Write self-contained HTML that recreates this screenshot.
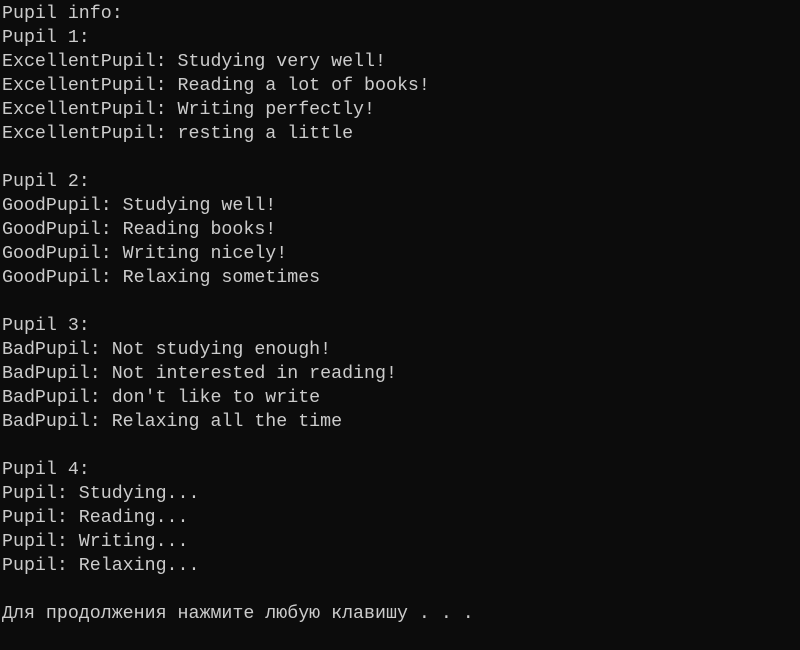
<!DOCTYPE html>
<html><head><meta charset="utf-8"><style>
html,body{margin:0;padding:0;background:#0c0c0c;width:800px;height:650px;overflow:hidden}
pre{margin:0;padding:2px 0 0 2px;font-family:"Liberation Mono","DejaVu Sans Mono",monospace;font-size:18.3px;line-height:24px;color:#cccccc;white-space:pre}
</style></head><body><pre>Pupil info:
Pupil 1:
ExcellentPupil: Studying very well!
ExcellentPupil: Reading a lot of books!
ExcellentPupil: Writing perfectly!
ExcellentPupil: resting a little

Pupil 2:
GoodPupil: Studying well!
GoodPupil: Reading books!
GoodPupil: Writing nicely!
GoodPupil: Relaxing sometimes

Pupil 3:
BadPupil: Not studying enough!
BadPupil: Not interested in reading!
BadPupil: don't like to write
BadPupil: Relaxing all the time

Pupil 4:
Pupil: Studying...
Pupil: Reading...
Pupil: Writing...
Pupil: Relaxing...

Для продолжения нажмите любую клавишу . . .</pre></body></html>
